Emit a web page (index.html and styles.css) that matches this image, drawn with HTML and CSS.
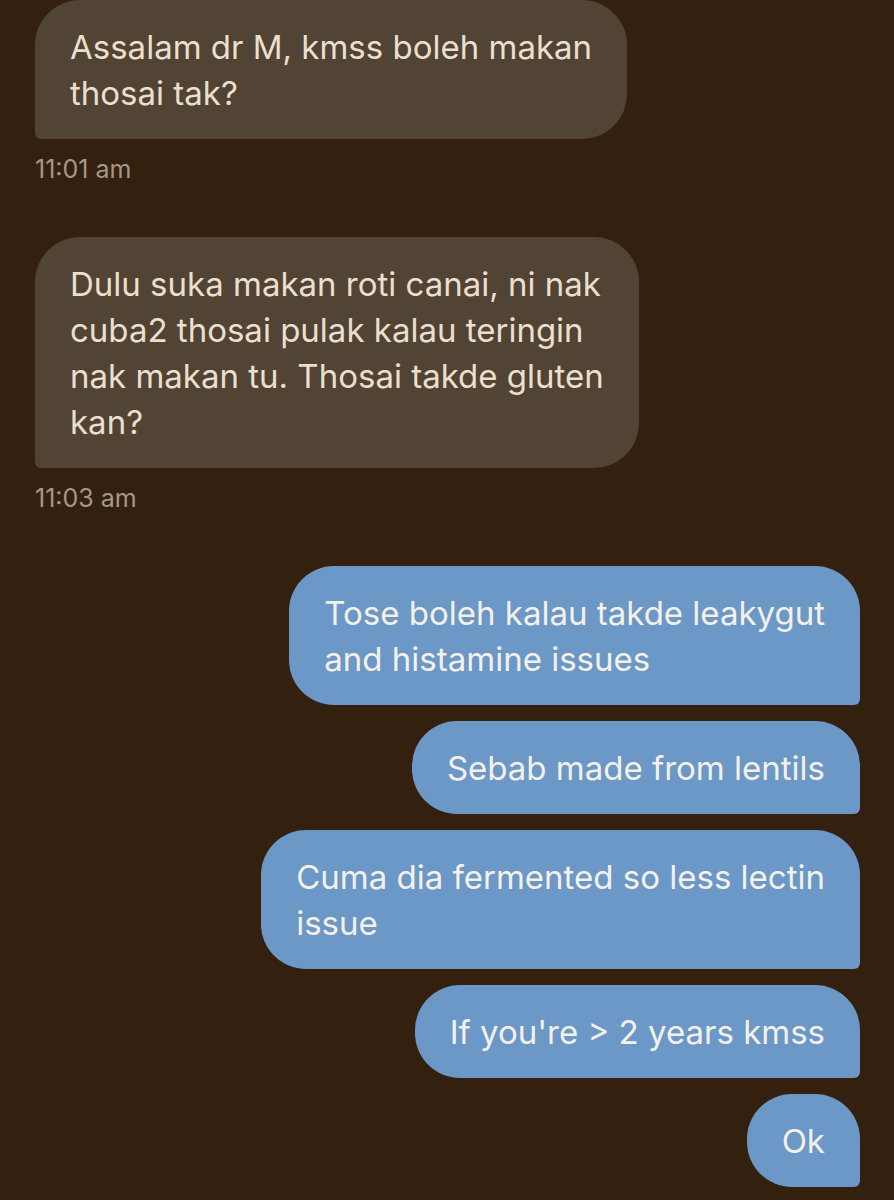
FILE: index.html
```html
<!DOCTYPE html>
<html lang="ms">
<head>
<meta charset="utf-8">
<title>Chat</title>
<link rel="stylesheet" href="styles.css">
</head>
<body>
<div class="chat">
  <div class="msg in">
    <div class="bubble">Assalam dr M, kmss boleh makan<br>thosai tak?</div>
    <div class="time">11:01 am</div>
  </div>
  <div class="msg in">
    <div class="bubble">Dulu suka makan roti canai, ni nak<br>cuba2 thosai pulak kalau teringin<br>nak makan tu. Thosai takde gluten<br>kan?</div>
    <div class="time">11:03 am</div>
  </div>
  <div class="msg out">
    <div class="bubble">Tose boleh kalau takde leakygut<br>and histamine issues</div>
    <div class="bubble">Sebab made from lentils</div>
    <div class="bubble">Cuma dia fermented so less lectin<br>issue</div>
    <div class="bubble">If you're &gt; 2 years kmss</div>
    <div class="bubble">Ok</div>
  </div>
</div>
</body>
</html>
```
FILE: styles.css
```css
html, body {
  margin: 0;
  padding: 0;
  background: #33200f;
}

body {
  font-family: "Inter", "Noto Sans", sans-serif;
  -webkit-font-smoothing: antialiased;
}

.chat {
  display: flex;
  flex-direction: column;
  padding: 0 34px 0 35px;
}

.msg {
  display: flex;
  flex-direction: column;
}

.msg.in {
  align-items: flex-start;
  margin-bottom: 53px;
}

.msg.out {
  align-items: flex-end;
  gap: 16px;
}

.bubble {
  box-sizing: border-box;
  white-space: nowrap;
  padding: 23.5px 35px;
  font-size: 33px;
  line-height: 46px;
  border-radius: 45px;
}

.in .bubble {
  background: #514434;
  color: #ebdfce;
  border-bottom-left-radius: 6px;
}

.out .bubble {
  background: #6b98c6;
  color: #f4f1ea;
  border-bottom-right-radius: 6px;
}

.time {
  margin-top: 15px;
  font-size: 25px;
  line-height: 30px;
  color: #a69886;
}
```
